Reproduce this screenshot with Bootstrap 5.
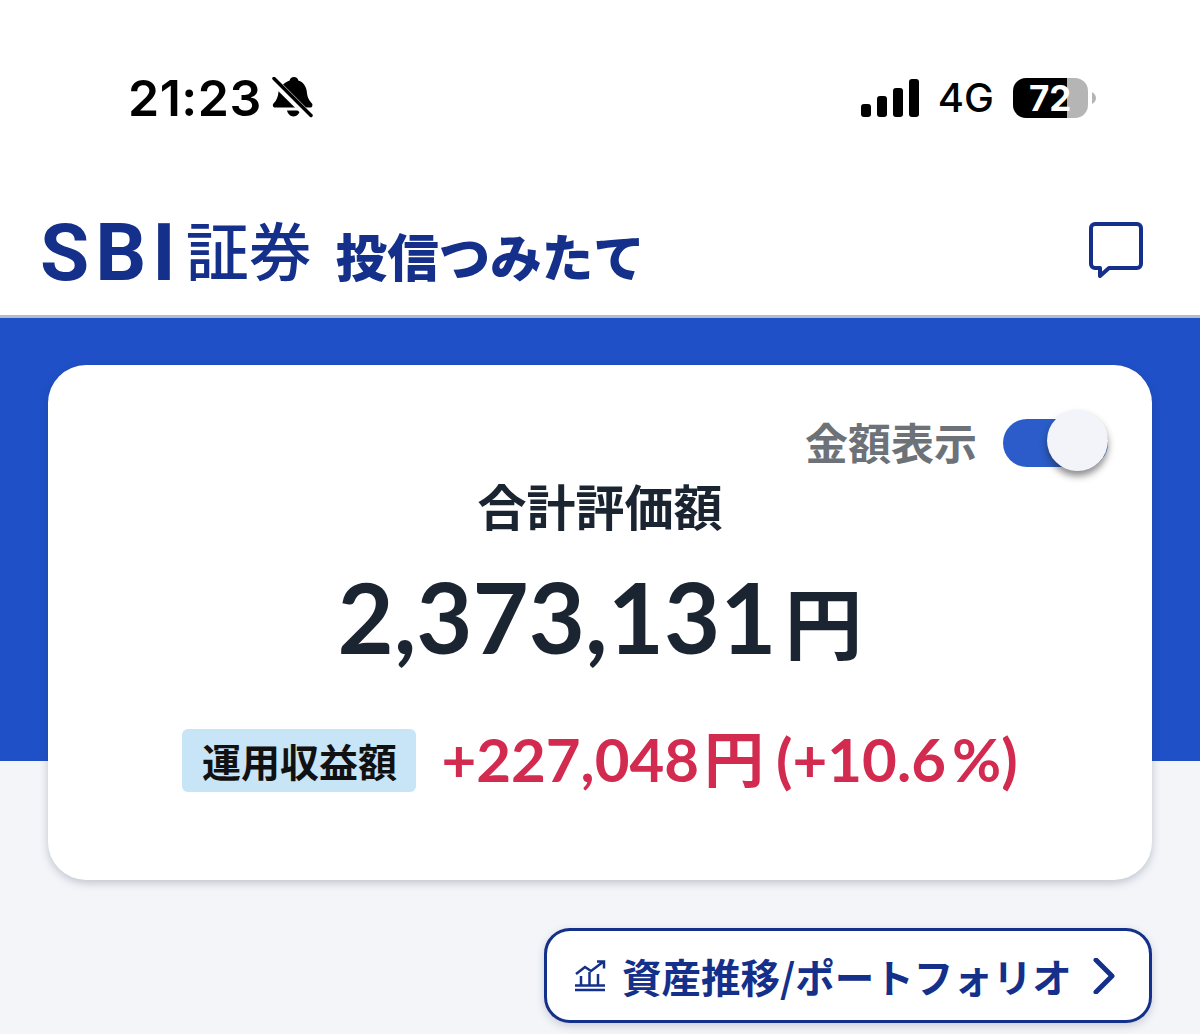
<!DOCTYPE html>
<html lang="ja">

<head>
    <meta charset="UTF-8">
    <meta name="viewport" content="width=device-width, initial-scale=1">
    <title>SBI証券 投信つみたて</title>

    <link rel="stylesheet" href="https://cdn.jsdelivr.net/npm/bootstrap@5.3.2/dist/css/bootstrap.min.css">
    <script src="https://cdn.jsdelivr.net/npm/bootstrap@5.3.2/dist/js/bootstrap.bundle.min.js"></script>

    <style>
        html, body {
            height: 1034px;
            overflow: hidden;
        }

        body {
            font-family: Lato, "Noto Sans CJK JP", sans-serif;
            background: #fff;
        }

        .status-bar {
            height: 195px;
            padding: 0 104px 0 128px;
            color: #000;
        }

        .status-time {
            font-family: Inter, sans-serif;
            font-size: 50px;
            font-weight: 600;
            line-height: 56px;
            letter-spacing: .5px;
        }

        .status-bell {
            margin-left: 10px;
        }

        .status-net {
            font-family: Inter, sans-serif;
            font-size: 40px;
            font-weight: 500;
            line-height: 46px;
            margin: 0 19px;
        }

        .battery {
            width: 75px;
            height: 40px;
            border-radius: 13px;
            background: linear-gradient(90deg, #000 0, #000 54px, #b5b5b5 54px, #b5b5b5 100%);
            color: #fff;
            font-family: Inter, sans-serif;
            font-size: 35px;
            font-weight: 700;
            line-height: 40px;
            padding-left: 16px;
        }

        .app-head {
            height: 123px;
            padding: 0 57px 0 40px;
            border-bottom: 3px solid #b4bcc9;
            color: #14308a;
        }

        .logo-wrap {
            margin-bottom: 2px;
        }

        .logo-sbi {
            font-family: Roboto, sans-serif;
            font-size: 80px;
            line-height: 1;
            letter-spacing: 6px;
            font-weight: 700;
            margin-bottom: 3px;
        }

        .logo-ja {
            font-family: "Noto Sans CJK JP", sans-serif;
            font-size: 63px;
            line-height: 1;
            font-weight: 500;
            margin-left: 4px;
            margin-bottom: 17px;
        }

        .logo-sub {
            font-family: "Noto Sans CJK JP", sans-serif;
            font-size: 51.500px;
            line-height: 1;
            font-weight: 900;
            margin-left: 24px;
            margin-bottom: 15px;
        }

        .chat-icon {
            margin-top: -10px;
        }

        .page-body {
            height: 716px;
            padding: 47px 48px 0;
            background: linear-gradient(180deg, #1f50c8 0, #1f50c8 443px, #f3f5f9 443px, #f3f5f9 100%);
        }

        .total-card {
            height: 515px;
            border-radius: 38px;
            background: #fff;
            box-shadow: 0 3px 8px rgba(40, 50, 70, .25);
            padding: 48px 44px 0 0;
            color: #1a2531;
        }

        .toggle-row {
            height: 60px;
        }

        .toggle-label {
            font-family: "Noto Sans CJK JP", sans-serif;
            font-size: 43px;
            font-weight: 700;
            line-height: 56px;
            color: #6c7278;
            margin-right: 26px;
            margin-bottom: 4px;
        }

        .toggle-track {
            width: 105px;
            height: 48px;
            border-radius: 24px;
            background: #2b5cc9;
            position: relative;
        }

        .toggle-knob {
            position: absolute;
            top: -9px;
            right: 0;
            width: 61px;
            height: 61px;
            border-radius: 50%;
            background: #f2f4f9;
            box-shadow: 0 5px 7px rgba(30, 30, 30, .5);
        }

        .total-title {
            font-family: "Noto Sans CJK JP", sans-serif;
            font-size: 49px;
            font-weight: 700;
            line-height: 60px;
            margin-top: 2px;
            margin-left: 44px;
        }

        .total-amount {
            margin-top: 22px;
            margin-left: 44px;
            font-size: 97px;
            font-weight: 700;
            line-height: 120px;
        }

        .total-amount .yen {
            font-family: "Noto Sans CJK JP", sans-serif;
            font-size: 78px;
            font-weight: 700;
            margin-left: 8px;
        }

        .gain-row {
            margin-top: 49px;
            margin-left: 44px;
        }

        .gain-tag {
            font-family: "Noto Sans CJK JP", sans-serif;
            width: 234px;
            height: 63px;
            border-radius: 6px;
            background: #c8e4f7;
            color: #111;
            font-size: 39px;
            font-weight: 700;
            line-height: 63px;
            text-align: center;
        }

        .gain-value {
            color: #d32b50;
            font-size: 60px;
            font-weight: 700;
            line-height: 63px;
            margin-left: 25px;
            margin-top: -5px;
        }

        .gain-value .yen {
            font-family: "Noto Sans CJK JP", sans-serif;
            font-size: 60px;
            font-weight: 700;
            margin: 0 12px 0 5px;
        }

        .gain-value .pct {
            margin-left: 6px;
        }

        .history-btn {
            width: 608px;
            height: 95px;
            margin-top: 48px;
            border: 3px solid #14308a;
            border-radius: 26px;
            background: #fff;
            color: #14308a;
            font-family: "Noto Sans CJK JP", sans-serif;
            font-size: 39.500px;
            font-weight: 700;
            line-height: 1;
            padding: 0 34px 0 27px;
            box-shadow: 0 3px 8px rgba(40, 50, 70, .2);
        }

        .history-btn:hover {
            background: #fff;
            color: #14308a;
            border-color: #14308a;
        }
    </style>
</head>

<body>
    <div class="status-bar d-flex justify-content-between align-items-center">
        <div class="d-flex align-items-center">
            <span class="status-time">21:23</span>
            <!-- silent bell -->
            <svg class="status-bell" width="42" height="42" viewBox="0 0 42 42">
                <path d="M22 0c2.500 0 4 1.500 4.300 3.500C32 5.300 34.500 10 35 16c.4 5 2.500 7.500 5 10.500 1 1.500.3 4-1.500 4H3c-2 0-2.800-2.500-1.500-4C4.500 23.500 6 20 6.500 15 7 10 13 5.300 17.700 3.500 18 1.500 19.500 0 22 0z"/>
                <path d="M15 33.500h13c-.5 3-3.500 6-6.500 6s-6-3-6.500-6z"/>
                <path d="M2 4l37 37" stroke="#fff" stroke-width="8"/>
                <path d="M2 1.500l37 37" stroke="#000" stroke-width="3.500" stroke-linecap="round"/>
            </svg>
        </div>
        <div class="d-flex align-items-center">
            <svg width="58" height="38" viewBox="0 0 58 38">
                <rect x="0" y="25" width="10" height="13" rx="3"/>
                <rect x="16" y="17" width="10" height="21" rx="3"/>
                <rect x="32" y="9" width="10" height="29" rx="3"/>
                <rect x="48" y="0" width="10" height="38" rx="3"/>
            </svg>
            <span class="status-net">4G</span>
            <div class="battery">72</div>
            <svg class="ms-1" width="4" height="12" viewBox="0 0 4 12">
                <path d="M0 0c2.500 1.500 4 3.500 4 6s-1.500 4.500-4 6z" fill="#b5b5b5"/>
            </svg>
        </div>
    </div>

    <header class="app-head d-flex justify-content-between align-items-center">
        <div class="logo-wrap d-flex align-items-end">
            <span class="logo-sbi">SBI</span>
            <span class="logo-ja">証券</span>
            <span class="logo-sub">投信つみたて</span>
        </div>
        <svg class="chat-icon" width="54" height="56" viewBox="0 0 54 56" fill="none">
            <path d="M6 2h42a4 4 0 0 1 4 4v36a4 4 0 0 1-4 4H20l-9 8v-8H6a4 4 0 0 1-4-4V6a4 4 0 0 1 4-4z" stroke="#14308a" stroke-width="4" stroke-linejoin="round"/>
        </svg>
    </header>

    <main class="page-body">
        <section class="total-card">
            <div class="toggle-row d-flex justify-content-end align-items-center">
                <span class="toggle-label">金額表示</span>
                <div class="toggle-track"><div class="toggle-knob"></div></div>
            </div>
            <div class="total-title text-center">合計評価額</div>
            <div class="total-amount text-center">2,373,131<span class="yen">円</span></div>
            <div class="gain-row d-flex justify-content-center">
                <div class="gain-tag">運用収益額</div>
                <div class="gain-value">+227,048<span class="yen">円</span>(+10.6<span class="pct">%</span>)</div>
            </div>
        </section>

        <div class="d-flex justify-content-end">
            <button type="button" class="btn history-btn d-flex align-items-center">
                <svg class="me-3" width="32" height="32" viewBox="0 0 32 32" fill="none" stroke="#14308a" stroke-width="2.500">
                    <path d="M1 30h30M1 25.500h30M7 25V16M15.500 25V12M24 25V14" />
                    <path d="M2 14l9-7 6 4L29 2M23 1.500h7v7"/>
                </svg>
                <span>資産推移/ポートフォリオ</span>
                <svg class="ms-auto" width="22" height="36" viewBox="0 0 22 36" fill="none">
                    <path d="M3 2l16 16L3 34" stroke="#14308a" stroke-width="5" stroke-linecap="round" stroke-linejoin="round"/>
                </svg>
            </button>
        </div>
    </main>
</body>

</html>
